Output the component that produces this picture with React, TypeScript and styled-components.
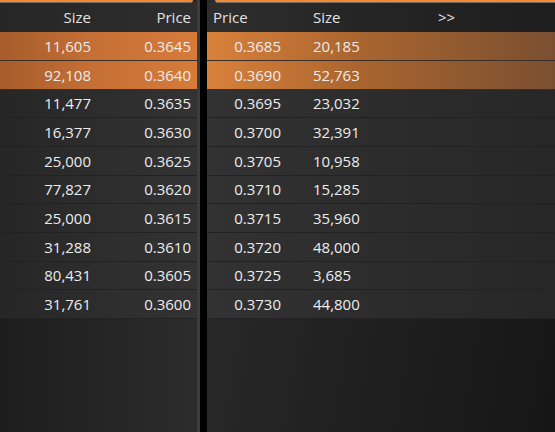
import React from "react";
import styled, { createGlobalStyle, css } from "styled-components";

const Global = createGlobalStyle`
  html, body { margin: 0; padding: 0; background: #1c1c1c; }
  body { font-family: "Open Sans", "DejaVu Sans", sans-serif; }
  #root { width: 555px; height: 432px; overflow: hidden; }
`;

const Board = styled.div`
  display: flex;
  width: 555px;
  height: 432px;
  overflow: hidden;
`;

const Panel = styled.div<{ $side: "bid" | "ask" }>`
  display: flex;
  flex-direction: column;
  ${(p) =>
    p.$side === "bid"
      ? css`
          width: 197px;
          border-right: 3px solid #3c3c3c;
          background: linear-gradient(90deg, #1d1d1d 0%, #2c2c2c 100%);
        `
      : css`
          flex: 1;
          background: linear-gradient(100deg, #2b2b2b 0%, #1f1f1f 55%, #161616 100%);
        `}
`;

const Divider = styled.div`
  width: 7px;
  background: #000;
`;

const TopStrip = styled.div<{ $side: "bid" | "ask" }>`
  height: 3px;
  display: flex;
  background: #2a2a2a;
  ${(p) => (p.$side === "bid" ? css`justify-content: flex-start;` : css`justify-content: flex-end;`)}
`;

const Tab = styled.div<{ $side: "bid" | "ask" }>`
  height: 2px;
  background: #ee8a3c;
  border-bottom: 1px solid #7a6a5e;
  ${(p) =>
    p.$side === "bid"
      ? css`
          width: 193px;
          border-bottom-right-radius: 3px;
        `
      : css`
          width: 340px;
          border-bottom-left-radius: 3px;
        `}
`;

const Header = styled.div<{ $side: "bid" | "ask" }>`
  height: 29.33px;
  display: flex;
  align-items: center;
  color: #e2e2e2;
  font-size: 15px;
  ${(p) =>
    p.$side === "bid"
      ? css`background: linear-gradient(90deg, #262626 0%, #2e2e2e 100%);`
      : css`background: linear-gradient(90deg, #2e2e2e 0%, #242424 50%, #1e1e1e 100%);`}
`;

const Row = styled.div<{ $side: "bid" | "ask"; $hot: boolean }>`
  box-sizing: border-box;
  height: 28.67px;
  padding-top: 1px;
  display: flex;
  align-items: center;
  font-size: 15px;
  color: #ececec;
  ${(p) =>
    p.$hot
      ? css`
          border-bottom: 1.6px solid #3a2e26;
          background: ${p.$side === "bid"
            ? "linear-gradient(90deg, #a65c2b 0%, #c46f35 45%, #d67b3a 100%)"
            : "linear-gradient(90deg, #d9813b 0%, #a8642f 45%, #7a4f31 100%)"};
        `
      : css`
          border-bottom: 1px solid #222222;
          background: ${p.$side === "bid"
            ? "linear-gradient(90deg, #262626 0%, #2d2d2d 50%, #333333 100%)"
            : "linear-gradient(90deg, #323232 0%, #2c2c2c 50%, #272727 100%)"};
        `}
`;

const Cell = styled.div<{ $w?: number; $align: "left" | "right"; $pl?: number; $pr?: number }>`
  box-sizing: border-box;
  ${(p) => (p.$w ? css`width: ${p.$w}px; flex: none;` : css`flex: 1;`)}
  text-align: ${(p) => p.$align};
  padding-left: ${(p) => p.$pl ?? 0}px;
  padding-right: ${(p) => p.$pr ?? 0}px;
  white-space: nowrap;
  line-height: 1;
`;

const bids = [
  ["11,605", "0.3645"],
  ["92,108", "0.3640"],
  ["11,477", "0.3635"],
  ["16,377", "0.3630"],
  ["25,000", "0.3625"],
  ["77,827", "0.3620"],
  ["25,000", "0.3615"],
  ["31,288", "0.3610"],
  ["80,431", "0.3605"],
  ["31,761", "0.3600"],
];

const asks = [
  ["0.3685", "20,185"],
  ["0.3690", "52,763"],
  ["0.3695", "23,032"],
  ["0.3700", "32,391"],
  ["0.3705", "10,958"],
  ["0.3710", "15,285"],
  ["0.3715", "35,960"],
  ["0.3720", "48,000"],
  ["0.3725", "3,685"],
  ["0.3730", "44,800"],
];

export default function App() {
  return (
    <>
      <Global />
      <Board>
        <Panel $side="bid">
          <TopStrip $side="bid">
            <Tab $side="bid" />
          </TopStrip>
          <Header $side="bid">
            <Cell $w={97} $align="right" $pr={6}>Size</Cell>
            <Cell $w={100} $align="right" $pr={6}>Price</Cell>
          </Header>
          {bids.map(([size, price], i) => (
            <Row key={i} $side="bid" $hot={i < 2}>
              <Cell $w={97} $align="right" $pr={6}>{size}</Cell>
              <Cell $w={100} $align="right" $pr={6}>{price}</Cell>
            </Row>
          ))}
        </Panel>
        <Divider />
        <Panel $side="ask">
          <TopStrip $side="ask">
            <Tab $side="ask" />
          </TopStrip>
          <Header $side="ask">
            <Cell $w={80} $align="left" $pl={6}>Price</Cell>
            <Cell $w={145} $align="left" $pl={26}>Size</Cell>
            <Cell $align="left" $pl={6}>&gt;&gt;</Cell>
          </Header>
          {asks.map(([price, size], i) => (
            <Row key={i} $side="ask" $hot={i < 2}>
              <Cell $w={80} $align="right" $pr={6}>{price}</Cell>
              <Cell $w={145} $align="left" $pl={26}>{size}</Cell>
              <Cell $align="left" $pl={6} />
            </Row>
          ))}
        </Panel>
      </Board>
    </>
  );
}
